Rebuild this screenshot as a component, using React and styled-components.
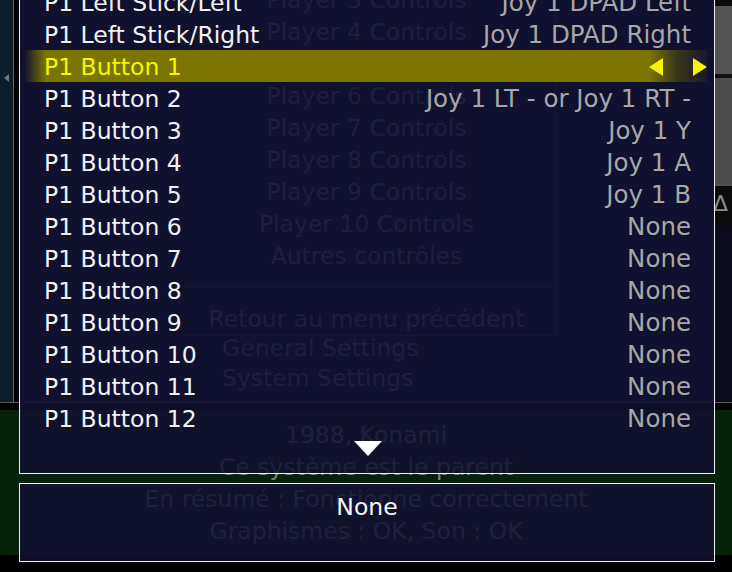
import React from "react";
import styled, { createGlobalStyle } from "styled-components";

const GlobalStyle = createGlobalStyle`
  html, body {
    margin: 0;
    padding: 0;
    background: #000;
  }
  body {
    font-family: "DejaVu Sans", Verdana, sans-serif;
  }
`;

const bindings = [
  ["P1 Left Stick/Left", "Joy 1 DPAD Left"],
  ["P1 Left Stick/Right", "Joy 1 DPAD Right"],
  ["P1 Button 1", ""],
  ["P1 Button 2", "Joy 1 LT - or Joy 1 RT -"],
  ["P1 Button 3", "Joy 1 Y"],
  ["P1 Button 4", "Joy 1 A"],
  ["P1 Button 5", "Joy 1 B"],
  ["P1 Button 6", "None"],
  ["P1 Button 7", "None"],
  ["P1 Button 8", "None"],
  ["P1 Button 9", "None"],
  ["P1 Button 10", "None"],
  ["P1 Button 11", "None"],
  ["P1 Button 12", "None"],
];

const selected = 2;

const menuItems = [
  "Player 3 Controls",
  "Player 4 Controls",
  "Player 5 Controls",
  "Player 6 Controls",
  "Player 7 Controls",
  "Player 8 Controls",
  "Player 9 Controls",
  "Player 10 Controls",
  "Autres contrôles",
];

const gameInfo = [
  "1988, Konami",
  "Ce système est le parent",
  "En résumé : Fonctionne correctement",
  "Graphismes : OK, Son : OK",
];

// right edge of the screen behind the dialog
const railBlocks = [
  { tone: "#0c0c0c", size: 6 },
  { tone: "#545454", size: 68 },
  { tone: "#101010", size: 4 },
  { tone: "#4e4e4e", size: 108 },
  { tone: "#0b0b0b", size: 40, glyph: "Δ" },
  { tone: "#0b0b1c", size: 180 },
];

const App = () => {
  return (
    <Screen>
      <GlobalStyle />
      <Backdrop>
        <TopArea>
          <LeftRail>
            <RailArrow />
          </LeftRail>
          <Gutter />
          <MenuArea>
            <MenuBox>
              {menuItems.map((item) => (
                <MenuText key={item}>{item}</MenuText>
              ))}
              <MenuDivider />
              <MenuText>Retour au menu précédent</MenuText>
            </MenuBox>
            <SettingsList>
              <SettingsText>General Settings</SettingsText>
              <SettingsText>System Settings</SettingsText>
            </SettingsList>
          </MenuArea>
          <RightRail>
            {railBlocks.map((b, i) => (
              <RailBlock key={i} $tone={b.tone} $size={b.size}>
                {b.glyph && <RailGlyph>{b.glyph}</RailGlyph>}
              </RailBlock>
            ))}
          </RightRail>
        </TopArea>
        <SplitLine />
        <InfoArea>
          {gameInfo.map((line) => (
            <InfoText key={line}>{line}</InfoText>
          ))}
        </InfoArea>
        <BottomBar />
      </Backdrop>

      <Dialog>
        <ListPanel>
          {bindings.map(([label, value], i) =>
            i === selected ? (
              <SelectedRow key={label}>
                <Label $active>{label}</Label>
                <Arrows>
                  <ArrowLeft />
                  <ArrowRight />
                </Arrows>
              </SelectedRow>
            ) : (
              <Row key={label}>
                <Label>{label}</Label>
                <Value>{value}</Value>
              </Row>
            )
          )}
          <MoreIndicator>
            <DownArrow />
          </MoreIndicator>
        </ListPanel>
        <InfoPanel>
          <InfoValue>None</InfoValue>
        </InfoPanel>
      </Dialog>
    </Screen>
  );
};

export default App;

const Screen = styled.div`
  position: relative;
  width: 732px;
  height: 572px;
  overflow: hidden;
  background: #000;
  font-family: "DejaVu Sans", Verdana, sans-serif;
`;

const Backdrop = styled.div`
  display: grid;
  grid-template-rows: 402px 8px 145px 1fr;
  height: 100%;
`;

const TopArea = styled.div`
  display: flex;
  min-height: 0;
`;

const LeftRail = styled.div`
  width: 13px;
  flex-shrink: 0;
  background: #0b1e2a;
  border-right: 1px solid #5b6670;
  display: flex;
  flex-direction: column;
`;

const RailArrow = styled.div`
  width: 0;
  height: 0;
  margin: 74px 0 0 4px;
  border-top: 4px solid transparent;
  border-bottom: 4px solid transparent;
  border-right: 5px solid #6c7780;
`;

const Gutter = styled.div`
  width: 5px;
  flex-shrink: 0;
  background: #000;
`;

const MenuArea = styled.div`
  flex: 1;
  min-width: 0;
  background: #0f0f2c;
  display: flex;
  flex-direction: column;
  align-items: center;
  font-size: 23.5px;
`;

const MenuBox = styled.div`
  width: 376px;
  margin-top: -16px;
  border-right: 1px solid #34344f;
  border-bottom: 1px solid #34344f;
  display: flex;
  flex-direction: column;
  align-items: center;
`;

const MenuText = styled.div`
  line-height: 32px;
  color: #70708c;
  white-space: nowrap;
`;

const MenuDivider = styled.div`
  width: 100%;
  height: 1px;
  margin: 14px 0 16px;
  background: #34344f;
`;

const SettingsList = styled.div`
  align-self: flex-start;
  margin: -3px 0 0 203px;
  display: flex;
  flex-direction: column;
`;

const SettingsText = styled.div`
  line-height: 30px;
  color: #70708c;
  white-space: nowrap;
`;

const RightRail = styled.div`
  width: 17px;
  flex-shrink: 0;
  display: flex;
  flex-direction: column;
  background: #0b0b1c;
`;

const RailBlock = styled.div`
  height: ${(p) => p.$size}px;
  flex-shrink: 0;
  background: ${(p) => p.$tone};
  overflow: hidden;
`;

const RailGlyph = styled.div`
  margin: 6px 0 0 -2px;
  font-size: 22px;
  line-height: 24px;
  color: #8a8a8a;
`;

const SplitLine = styled.div`
  background: #000;
  border-top: 1px solid #5a5a5a;
`;

const InfoArea = styled.div`
  background: #072208;
  padding-top: 9px;
  display: flex;
  flex-direction: column;
  align-items: center;
  font-size: 23.5px;
`;

const InfoText = styled.div`
  line-height: 32px;
  color: #7e7e88;
`;

const BottomBar = styled.div`
  background: #000;
`;

const Dialog = styled.div`
  position: absolute;
  left: 19px;
  top: -15px;
  width: 696px;
  display: flex;
  flex-direction: column;
  gap: 9px;
`;

const ListPanel = styled.div`
  box-sizing: border-box;
  border: 1px solid #efefef;
  background: rgba(16, 16, 48, 0.86);
  padding: 0 7px 0 4px;
  display: flex;
  flex-direction: column;
`;

const Row = styled.div`
  height: 32px;
  padding: 1px 16px 0 20px;
  box-sizing: border-box;
  display: flex;
  align-items: center;
  justify-content: space-between;
  white-space: nowrap;
`;

const SelectedRow = styled(Row)`
  padding-right: 0;
  background: linear-gradient(
    90deg,
    rgba(123, 117, 0, 0) 0px,
    #7b7500 22px,
    #7b7500 calc(100% - 58px),
    rgba(90, 86, 10, 0.55) calc(100% - 30px),
    rgba(60, 58, 20, 0.2) 100%
  );
`;

const Label = styled.span`
  font-size: 23.5px;
  color: ${(p) => (p.$active ? "#f6f600" : "#f2f2f2")};
`;

const Value = styled.span`
  font-size: 24.5px;
  color: #a7a7a7;
`;

const Arrows = styled.div`
  display: flex;
  align-items: center;
  gap: 30px;
`;

const ArrowLeft = styled.div`
  width: 0;
  height: 0;
  border-top: 9px solid transparent;
  border-bottom: 9px solid transparent;
  border-right: 14px solid #f6f600;
`;

const ArrowRight = styled.div`
  width: 0;
  height: 0;
  border-top: 9px solid transparent;
  border-bottom: 9px solid transparent;
  border-left: 14px solid #f6f600;
`;

const MoreIndicator = styled.div`
  height: 39px;
  padding-top: 7px;
  box-sizing: border-box;
  display: flex;
  justify-content: center;
`;

const DownArrow = styled.div`
  width: 0;
  height: 0;
  margin-left: 4px;
  border-left: 14px solid transparent;
  border-right: 14px solid transparent;
  border-top: 15px solid #ffffff;
`;

const InfoPanel = styled.div`
  height: 79px;
  box-sizing: border-box;
  border: 1px solid #efefef;
  background: rgba(16, 16, 48, 0.86);
  padding-top: 7px;
  display: flex;
  justify-content: center;
`;

const InfoValue = styled.div`
  font-size: 23.5px;
  line-height: 32px;
  color: #f6f6f6;
`;
